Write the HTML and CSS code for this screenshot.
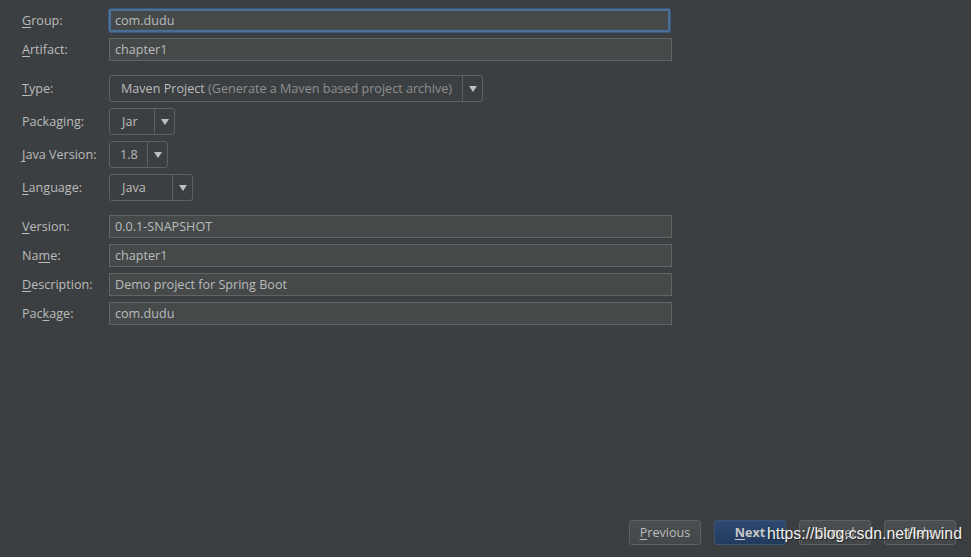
FILE: index.html
```html
<!DOCTYPE html>
<html>
<head>
<meta charset="utf-8">
<link rel="stylesheet" href="styles.css">
</head>
<body>
<div class="dialog">
  <div class="form">
    <div class="row"><label class="lbl"><u>G</u>roup:</label><div class="field focus">com.dudu</div></div>
    <div class="row"><label class="lbl"><u>A</u>rtifact:</label><div class="field">chapter1</div></div>

    <div class="row gap-top combo-row"><label class="lbl"><u>T</u>ype:</label>
      <div class="combo w-type"><span class="val">Maven Project <span class="hint">(Generate a Maven based project archive)</span></span><span class="arrow"></span></div></div>
    <div class="row combo-row"><label class="lbl">Packa<u>g</u>ing:</label>
      <div class="combo w-jar"><span class="val">Jar</span><span class="arrow"></span></div></div>
    <div class="row combo-row"><label class="lbl"><u>J</u>ava Version:</label>
      <div class="combo w-ver"><span class="val">1.8</span><span class="arrow"></span></div></div>
    <div class="row combo-row"><label class="lbl"><u>L</u>anguage:</label>
      <div class="combo w-lang"><span class="val">Java</span><span class="arrow"></span></div></div>

    <div class="row gap-top"><label class="lbl"><u>V</u>ersion:</label><div class="field">0.0.1-SNAPSHOT</div></div>
    <div class="row"><label class="lbl">Na<u>m</u>e:</label><div class="field">chapter1</div></div>
    <div class="row"><label class="lbl"><u>D</u>escription:</label><div class="field">Demo project for Spring Boot</div></div>
    <div class="row"><label class="lbl">Pac<u>k</u>age:</label><div class="field">com.dudu</div></div>
  </div>

  <div class="buttons">
    <button class="btn"><u>P</u>revious</button>
    <button class="btn primary"><u>N</u>ext</button>
    <button class="btn">Cancel</button>
    <button class="btn">Help</button>
  </div>
  <div class="watermark">https://blog.csdn.net/lmwind</div>
</div>
</body>
</html>
```
FILE: styles.css
```css
html, body {
  margin: 0;
  padding: 0;
  background: #3c3f41;
  height: 100%;
}
.dialog {
  position: relative;
  height: 557px;
  width: 971px;
  display: flex;
  flex-direction: column;
  justify-content: space-between;
  font-family: "Open Sans", "Noto Sans CJK SC", sans-serif;
  font-size: 12.6px;
  color: #bbbbbb;
}
.form {
  padding: 9px 0 0 22px;
  display: flex;
  flex-direction: column;
  gap: 6px;
}
.row {
  display: flex;
  align-items: center;
  height: 23px;
}
.combo-row { height: 27px; }
.gap-top { margin-top: 8px; }
.lbl {
  width: 87px;
  flex: none;
}
u { text-decoration: underline; text-underline-offset: 2px; }
.field {
  box-sizing: border-box;
  width: 563px;
  height: 23px;
  background: #45494a;
  border: 1px solid #646464;
  padding: 0 5px;
  line-height: 21px;
  color: #bbbbbb;
}
.field.focus {
  border: 2px solid #4a709a;
  border-radius: 2px;
  padding: 0 4px;
  line-height: 19px;
  width: 561px;
  box-shadow: 0 0 0 1px #3d5a7a;
}
.combo {
  box-sizing: border-box;
  height: 27px;
  border: 1px solid #5e6060;
  border-radius: 3px;
  display: flex;
  align-items: stretch;
}
.combo .val {
  flex: 1;
  padding-left: 11px;
  line-height: 25px;
  white-space: nowrap;
}
.hint { color: #8f8f8f; }
.combo .arrow {
  width: 19px;
  flex: none;
  border-left: 1px solid #5e6060;
  display: flex;
  align-items: center;
  justify-content: center;
}
.combo .arrow::after {
  content: "";
  border-left: 4px solid transparent;
  border-right: 4px solid transparent;
  border-top: 6px solid #c0c0c0;
}
.w-type { width: 374px; }
.w-jar { width: 66px; }
.w-jar .val { padding-left: 12px; }
.w-ver { width: 59px; }
.w-ver .val { padding-left: 10px; }
.w-lang { width: 84px; }
.w-lang .val { padding-left: 12px; }

.buttons {
  display: flex;
  justify-content: flex-end;
  gap: 13px;
  padding: 0 15px 12px 0;
}
.btn {
  box-sizing: border-box;
  width: 72px;
  height: 25px;
  border: 1px solid #5e6060;
  border-radius: 3px;
  background: linear-gradient(#4a4e50, #43474a);
  color: #bbbbbb;
  font-family: "Open Sans", sans-serif;
  font-size: 12.6px;
  padding: 0;
}
.btn.primary {
  background: linear-gradient(#2d4a72, #223a5c);
  border-color: #3d5375;
  font-weight: bold;
  color: #c8c8c8;
}
.watermark {
  position: absolute;
  left: 767px;
  top: 525px;
  font-family: "Liberation Sans", Arial, sans-serif;
  font-size: 15.8px;
  color: #f0f0f0;
  text-shadow: 1px 1px 1px #222;
}
```
